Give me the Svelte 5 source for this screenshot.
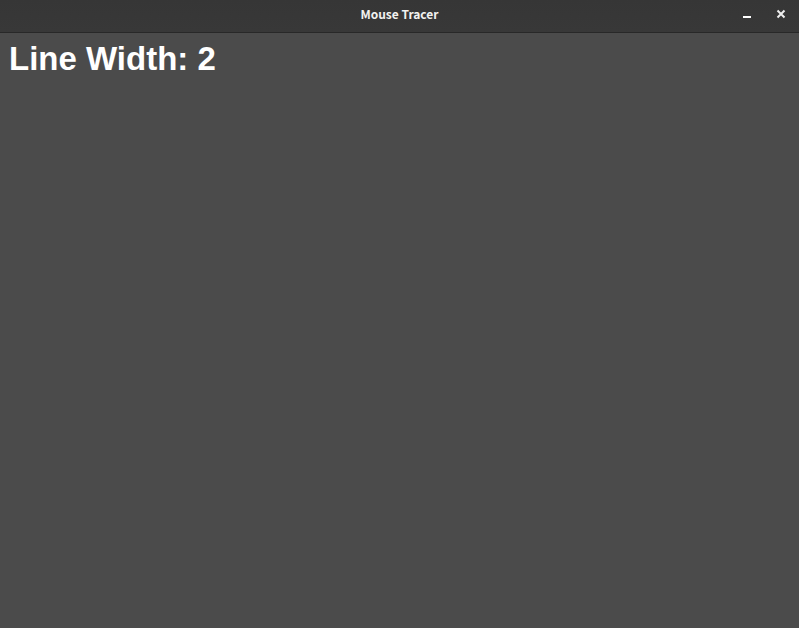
<script>
  let lineWidth = $state(2);
</script>

<div class="window">
  <header>
    <h1>Mouse Tracer</h1>
    <div class="controls">
      <button aria-label="Minimize">
        <svg width="16" height="16" viewBox="0 0 16 16"><path d="M4 10h8v2H4z" fill="#fff" /></svg>
      </button>
      <button aria-label="Close">
        <svg width="16" height="16" viewBox="0 0 16 16"><path d="M4.5 4.5l7 7m0-7l-7 7" stroke="#eee" stroke-width="2" /></svg>
      </button>
    </div>
  </header>
  <main>
    <p>Line Width: {lineWidth}</p>
  </main>
</div>

<style>
  :global(body) { margin: 0; }
  .window {
    min-height: 100vh;
    display: flex;
    flex-direction: column;
    background: #4b4b4b;
    color: #fff;
  }
  header {
    display: grid;
    grid-template-columns: 1fr auto 1fr;
    align-items: center;
    height: 32px;
    background: linear-gradient(#363636, #383838);
    border-bottom: 1px solid #282828;
  }
  h1 {
    grid-column: 2;
    margin: 0;
    padding-bottom: 4px;
    color: #f2f2f0;
    font: bold 12px/20px "Noto Sans CJK JP", "Noto Sans", sans-serif;
  }
  .controls {
    display: flex;
    justify-content: flex-end;
    gap: 10px;
    padding: 0 6px 4px 0;
  }
  button {
    display: flex;
    align-items: center;
    justify-content: center;
    width: 24px;
    height: 24px;
    padding: 0;
    border: 0;
    background: none;
  }
  main { flex: 1; padding: 6px 9px; }
  p {
    margin: 0;
    font: bold 33px/40px "Liberation Sans", Arial, sans-serif;
  }
</style>
